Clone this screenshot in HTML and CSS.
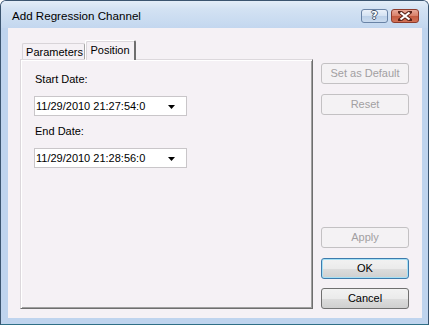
FILE: index.html
```html
<!DOCTYPE html>
<html>
<head>
<meta charset="utf-8">
<link rel="stylesheet" href="styles.css">
</head>
<body>
<div class="window">
  <div class="titlebar">
    <span class="title">Add Regression Channel</span>
    <div class="caption-buttons">
      <div class="cap help"><span>?</span></div>
      <div class="cap close">
        <svg width="14" height="10" viewBox="0 0 14 10">
          <path d="M2 1 L12 9 M12 1 L2 9" stroke="#5a2218" stroke-width="4" stroke-linecap="square"/>
          <path d="M2.5 1.5 L11.5 8.5 M11.5 1.5 L2.5 8.5" stroke="#ffffff" stroke-width="2.2"/>
        </svg>
      </div>
    </div>
  </div>
  <div class="client">
    <div class="tabs">
      <div class="tabstrip">
        <div class="tab">Parameters</div>
        <div class="tab selected">Position</div>
      </div>
      <div class="panel">
        <div class="label">Start Date:</div>
        <div class="combo">
          <span class="value">11/29/2010 21:27:54:0</span>
          <svg class="arrow" width="7" height="4" viewBox="0 0 7 4"><path d="M0 0 H7 L3.5 4 Z" fill="#000"/></svg>
        </div>
        <div class="label second">End Date:</div>
        <div class="combo">
          <span class="value">11/29/2010 21:28:56:0</span>
          <svg class="arrow" width="7" height="4" viewBox="0 0 7 4"><path d="M0 0 H7 L3.5 4 Z" fill="#000"/></svg>
        </div>
      </div>
    </div>
    <div class="buttons">
      <div class="btn disabled">Set as Default</div>
      <div class="btn disabled">Reset</div>
      <div class="spacer"></div>
      <div class="btn disabled">Apply</div>
      <div class="btn default">OK</div>
      <div class="btn normal">Cancel</div>
    </div>
  </div>
</div>
</body>
</html>
```

FILE: styles.css
```css
html, body {
  margin: 0;
  padding: 0;
  background: #ffffff;
}
body {
  width: 429px;
  height: 325px;
  font-family: "Liberation Sans", Arial, sans-serif;
  font-size: 11px;
  color: #000;
}
.window {
  box-sizing: border-box;
  width: 429px;
  height: 325px;
  border: 1px solid #3b5570;
  border-bottom-color: #2f6f86;
  border-radius: 6px 6px 0 0;
  background: #bfd4ee;
  padding: 0 6px 6px 7px;
  display: flex;
  flex-direction: column;
}
.titlebar {
  height: 27px;
  margin: 0 -6px 0 -7px;
  padding: 0 8px 0 11px;
  border-radius: 5px 5px 0 0;
  background: linear-gradient(180deg, #e3edf8 0px, #d3e2f3 8px, #c3d7ef 27px);
  display: flex;
  align-items: center;
  justify-content: space-between;
}
.title {
  font-size: 11.6px;
  color: #000;
  padding-top: 2px;
}
.caption-buttons {
  display: flex;
  gap: 3px;
  align-items: center;
  margin-top: 3px;
  margin-right: 1px;
}
.cap {
  box-sizing: border-box;
  height: 14px;
  border-radius: 3px;
  display: flex;
  align-items: center;
  justify-content: center;
}
.help {
  width: 27px;
  border: 1px solid #6983a6;
  background: linear-gradient(180deg, #eaf1fa 0%, #d4e2f2 50%, #bcd0e8 51%, #cadbef 100%);
}
.help span {
  font-family: "DejaVu Sans", sans-serif;
  font-weight: bold;
  font-size: 11px;
  line-height: 12px;
  color: #ffffff;
  text-shadow: -1px 0 #44546a, 1px 0 #44546a, 0 -1px #44546a, 0 1px #44546a;
}
.close {
  width: 28px;
  border: 1px solid #8d3b2c;
  background: linear-gradient(180deg, #e8a898 0%, #d97f68 50%, #c35a40 51%, #d27257 100%);
}
.client {
  flex: 1;
  background: #f5f1f5;
  display: flex;
  padding: 12px 0 9px 12px;
}
.tabs {
  width: 293px;
  display: flex;
  flex-direction: column;
}
.tabstrip {
  display: flex;
  align-items: flex-end;
  padding-left: 2px;
  height: 19px;
  position: relative;
  z-index: 2;
}
.tab {
  box-sizing: border-box;
  height: 16px;
  width: 63px;
  border: 1px solid #d8d4d8;
  border-bottom: none;
  border-right-color: #a6a6a6;
  border-radius: 2px 2px 0 0;
  background: #f5f1f5;
  text-align: center;
  line-height: 16px;
  padding-left: 2px;
}
.tab.selected {
  width: 51px;
  height: 20px;
  margin-bottom: -1px;
  border-left-color: #ffffff;
  border-top-color: #ffffff;
  border-right: 2px solid #6e6e6e;
  background: #f5f1f5;
  line-height: 18px;
  padding-left: 0;
  box-shadow: inset 1px 1px 0 #dcd8dc;
}
.panel {
  flex: 1;
  border: 1px solid #dcd8dc;
  border-right-color: #6e6e6e;
  border-bottom-color: #6e6e6e;
  box-shadow: inset 1px 1px 0 #ffffff, inset -1px -1px 0 #a0a0a0;
  background: #f5f1f5;
  padding: 13px 0 0 13px;
}
.label {
  height: 13px;
  line-height: 13px;
  margin-left: 1px;
}
.label.second {
  margin-top: 9px;
}
.combo {
  box-sizing: border-box;
  width: 153px;
  height: 20px;
  margin-top: 10px;
  background: #ffffff;
  border: 1px solid #c9c6c9;
  display: flex;
  align-items: center;
  justify-content: space-between;
  padding: 0 11px 0 1px;
}
.combo .value {
  line-height: 14px;
}
.combo .arrow {
  display: block;
  margin-top: 1px;
}
.buttons {
  display: flex;
  flex-direction: column;
  margin-left: 8px;
  padding-top: 23px;
  width: 88px;
}
.btn {
  box-sizing: border-box;
  height: 21px;
  line-height: 19px;
  text-align: center;
  border-radius: 3px;
  margin-bottom: 10px;
}
.btn:last-child {
  margin-bottom: 0;
}
.btn.default {
  margin-bottom: 9px;
}
.spacer {
  flex: 1;
}
.btn.disabled {
  border: 1px solid #c3c1c3;
  background: #f4f2f4;
  color: #a2a0a2;
}
.btn.default {
  border: 1px solid #3d7bad;
  background: linear-gradient(180deg, #f2f2f2 0%, #ebebeb 50%, #dddddd 51%, #cfcfcf 100%);
  box-shadow: inset 0 0 0 1px #a6e0f5;
}
.btn.normal {
  border: 1px solid #707070;
  background: linear-gradient(180deg, #f2f2f2 0%, #ebebeb 50%, #dddddd 51%, #cfcfcf 100%);
}
```
